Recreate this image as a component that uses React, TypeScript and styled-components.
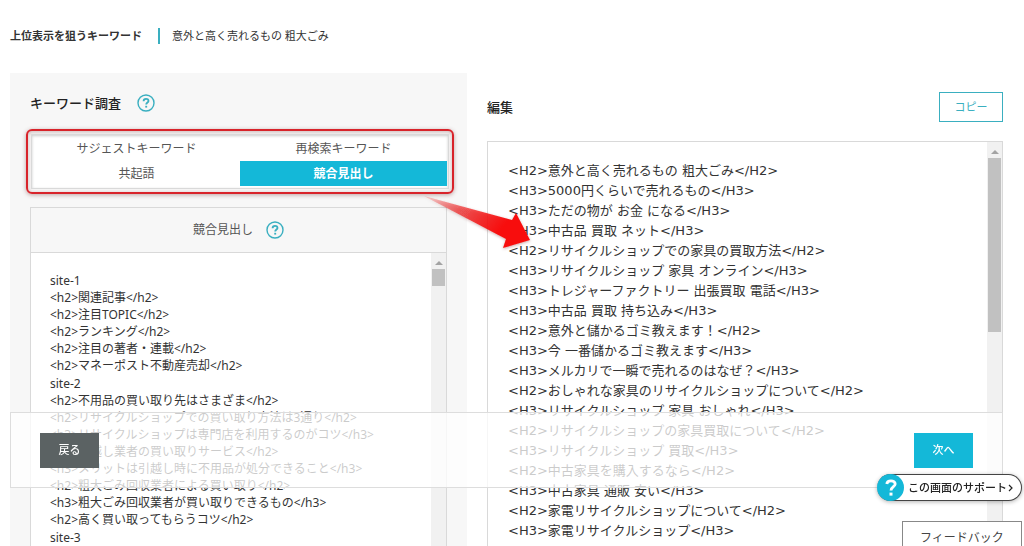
import React from "react";
import styled, { createGlobalStyle } from "styled-components";

const C = {
  accent: "#14b8d8",
  teal: "#3aafc0",
  line: "#d9d9d9",
  panel: "#f7f7f7",
  text: "#333",
  red: "#d8232a",
};

const Global = createGlobalStyle`
  *, *::before, *::after { box-sizing: border-box; }
  body {
    margin: 0;
    background: #fff;
    color: ${C.text};
    font-family: "Noto Sans", "Noto Sans CJK JP", sans-serif;
    font-size: 12px;
    line-height: 20px;
  }
  button, textarea { font: inherit; color: inherit; margin: 0; border-radius: 0; }
  h1, h2, h3, p, ul { margin: 0; padding: 0; font-size: inherit; font-weight: inherit; }
`;

const Page = styled.div`
  display: flex;
  flex-direction: column;
  height: 100vh;
  overflow: hidden;
  padding: 26px 21px 0 10px;
`;

const KeywordBar = styled.header`
  display: flex;
  align-items: center;
  flex: none;
  height: 20px;
  font-size: 11px;
`;

const KeywordLabel = styled.h1`
  padding-right: 16px;
  border-right: 2px solid ${C.teal};
  line-height: 16px;
  font-weight: 700;
`;

const KeywordValue = styled.p`
  padding-left: 12px;
`;

const Columns = styled.main`
  display: grid;
  grid-template-columns: 457fr 516fr;
  column-gap: 20px;
  flex: 1;
  min-height: 0;
  padding-top: 27px;
`;

const Research = styled.section`
  display: flex;
  flex-direction: column;
  min-height: 0;
  padding: 20px 20px 0;
  background: ${C.panel};
`;

const Title = styled.h2`
  display: flex;
  align-items: center;
  gap: 16px;
  font-size: 13px;
  font-weight: 500;
  color: #222;
`;

const HelpButton = styled.button`
  display: flex;
  padding: 0;
  border: 0;
  background: none;
  color: ${C.teal};
`;

const TabFrame = styled.div`
  flex: none;
  margin: 16px -7px 0 -4px;
  padding: 3px;
  border: 2px solid ${C.red};
  border-radius: 6px;
  box-shadow: 0 1px 4px rgba(120, 60, 60, 0.45), inset 0 1px 4px rgba(120, 60, 60, 0.35);
`;

const Tabs = styled.div`
  display: grid;
  grid-template-columns: 1fr 1fr;
  padding: 1px 1px 2px;
  border: 1px solid ${C.line};
  background: #fff;
  box-shadow: inset 0 1px 3px rgba(0, 0, 0, 0.2);
`;

const Tab = styled.button<{ $active?: boolean }>`
  height: 25px;
  padding: 0;
  border: 0;
  font-size: 12px;
  line-height: 25px;
  color: ${(p) => (p.$active ? "#fff" : "#555")};
  background: ${(p) => (p.$active ? C.accent : "transparent")};
  font-weight: ${(p) => (p.$active ? 700 : 400)};
`;

const ResultCard = styled.div`
  display: flex;
  flex-direction: column;
  flex: 1;
  min-height: 0;
  margin-top: 13px;
  border: 1px solid ${C.line};
  border-bottom: 0;
`;

const ResultHead = styled.h3`
  display: flex;
  align-items: center;
  justify-content: center;
  flex: none;
  gap: 13px;
  height: 45px;
  border-bottom: 1px solid ${C.line};
  color: #555;
`;

const ScrollArea = styled.div`
  display: flex;
  flex: 1;
  min-height: 0;
  background: #fff;
`;

const Results = styled.div`
  display: flex;
  flex-direction: column;
  flex: 1;
  gap: 1px;
  padding: 19px;
  overflow: hidden;
  white-space: nowrap;
`;

const Site = styled.ul`
  list-style: none;
  line-height: 17px;
`;

const Track = styled.div`
  display: flex;
  flex-direction: column;
  align-items: center;
  flex: none;
  width: 15px;
  padding: 8px 1px 0;
  gap: 4px;
  background: #f1f1f1;
`;

const Thumb = styled.div<{ $length: number }>`
  flex: none;
  width: 13px;
  height: ${(p) => p.$length}px;
  background: #c1c1c1;
`;

const Editor = styled.section`
  display: flex;
  flex-direction: column;
  min-height: 0;
  padding-top: 19px;
`;

const EditorHead = styled.div`
  display: flex;
  align-items: center;
  justify-content: space-between;
  flex: none;
`;

const CopyButton = styled.button`
  width: 64px;
  height: 30px;
  padding: 0;
  border: 1px solid ${C.teal};
  background: #fff;
  color: ${C.teal};
  font-size: 11px;
`;

const EditorBox = styled.div`
  display: flex;
  flex: 1;
  min-height: 0;
  margin-top: 19px;
  border: 1px solid ${C.line};
  border-bottom: 0;
`;

const EditorText = styled.textarea`
  flex: 1;
  min-width: 0;
  padding: 19px 20px 0;
  border: 0;
  outline: 0;
  resize: none;
  overflow: hidden;
  background: #fff;
  color: ${C.text};
  font-family: "DejaVu Sans", "Noto Sans CJK JP", sans-serif;
  font-size: 13px;
  line-height: 20px;
  white-space: pre;
`;

const FooterBar = styled.footer`
  position: fixed;
  left: 10px;
  right: 21px;
  bottom: 58px;
  display: flex;
  align-items: center;
  justify-content: space-between;
  height: 76px;
  padding: 0 29px;
  border: 1px solid #ddd;
  background: rgba(255, 255, 255, 0.75);
`;

const NavButton = styled.button<{ $primary?: boolean }>`
  width: 59px;
  height: 35px;
  padding: 0;
  border: 0;
  background: ${(p) => (p.$primary ? C.accent : "#5b6263")};
  color: #fff;
  font-size: 11px;
  font-weight: 500;
`;

const SupportButton = styled.button`
  position: fixed;
  right: 2px;
  bottom: 45px;
  display: flex;
  align-items: center;
  width: 145px;
  height: 27px;
  padding: 0;
  border: 1px solid #444;
  border-left: 0;
  border-radius: 14px;
  background: #fff;
  color: #222;
  font-size: 11px;
  font-weight: 500;
  white-space: nowrap;
  box-shadow: 0 1px 4px rgba(0, 0, 0, 0.3);
`;

const SupportMark = styled.span`
  display: flex;
  align-items: center;
  justify-content: center;
  flex: none;
  width: 27px;
  height: 27px;
  margin-right: 4px;
  border-radius: 50%;
  background: ${C.accent};
  color: #fff;
`;

const FeedbackButton = styled.button`
  position: fixed;
  right: 2px;
  bottom: 0;
  width: 120px;
  height: 25px;
  padding: 6px 0 0;
  border: 1px solid #888;
  border-bottom: 0;
  background: #fff;
  color: #444;
  font-size: 12px;
  line-height: 20px;
`;

const Arrow = styled.svg`
  position: absolute;
  left: 420px;
  top: 190px;
  pointer-events: none;
`;

const sites: { name: string; lines: string[] }[] = [
  {
    name: "site-1",
    lines: [
      "<h2>関連記事</h2>",
      "<h2>注目TOPIC</h2>",
      "<h2>ランキング</h2>",
      "<h2>注目の著者・連載</h2>",
      "<h2>マネーポスト不動産売却</h2>",
    ],
  },
  {
    name: "site-2",
    lines: [
      "<h2>不用品の買い取り先はさまざま</h2>",
      "<h2>リサイクルショップでの買い取り方法は3通り</h2>",
      "<h3>リサイクルショップは専門店を利用するのがコツ</h3>",
      "<h2>引越し業者の買い取りサービス</h2>",
      "<h3>メリットは引越し時に不用品が処分できること</h3>",
      "<h2>粗大ごみ回収業者による買い取り</h2>",
      "<h3>粗大ごみ回収業者が買い取りできるもの</h3>",
      "<h2>高く買い取ってもらうコツ</h2>",
    ],
  },
  { name: "site-3", lines: [] },
];

const outline = [
  "<H2>意外と高く売れるもの 粗大ごみ</H2>",
  "<H3>5000円くらいで売れるもの</H3>",
  "<H3>ただの物が お金 になる</H3>",
  "<H3>中古品 買取 ネット</H3>",
  "<H2>リサイクルショップでの家具の買取方法</H2>",
  "<H3>リサイクルショップ 家具 オンライン</H3>",
  "<H3>トレジャーファクトリー 出張買取 電話</H3>",
  "<H3>中古品 買取 持ち込み</H3>",
  "<H2>意外と儲かるゴミ教えます！</H2>",
  "<H3>今 一番儲かるゴミ教えます</H3>",
  "<H3>メルカリで一瞬で売れるのはなぜ？</H3>",
  "<H2>おしゃれな家具のリサイクルショップについて</H2>",
  "<H3>リサイクルショップ 家具 おしゃれ</H3>",
  "<H2>リサイクルショップの家具買取について</H2>",
  "<H3>リサイクルショップ 買取</H3>",
  "<H2>中古家具を購入するなら</H2>",
  "<H3>中古家具 通販 安い</H3>",
  "<H2>家電リサイクルショップについて</H2>",
  "<H3>家電リサイクルショップ</H3>",
].join("\n");

const HelpIcon = () => (
  <svg width="18" height="18" viewBox="0 0 18 18" fill="none" stroke="currentColor" aria-hidden="true">
    <circle cx="9" cy="9" r="8" strokeWidth="1.4" />
    <path d="M6.6 7.2C6.6 5.6 7.6 4.8 9 4.8s2.5.8 2.5 2.1c0 1.5-2.3 1.7-2.3 3.6" strokeWidth="1.8" />
    <path d="M9.2 11.8v1.8" strokeWidth="1.9" />
  </svg>
);

const ScrollTrack = ({ length }: { length: number }) => (
  <Track aria-hidden="true">
    <svg width="8" height="4" viewBox="0 0 8 4">
      <path d="M0 4L4 0l4 4z" fill="#a3a3a3" />
    </svg>
    <Thumb $length={length} />
  </Track>
);

export default function App() {
  return (
    <>
      <Global />
      <Page>
        <KeywordBar>
          <KeywordLabel>上位表示を狙うキーワード</KeywordLabel>
          <KeywordValue>意外と高く売れるもの 粗大ごみ</KeywordValue>
        </KeywordBar>

        <Columns>
          <Research>
            <Title>
              キーワード調査
              <HelpButton type="button" aria-label="ヘルプ">
                <HelpIcon />
              </HelpButton>
            </Title>
            <TabFrame>
              <Tabs role="tablist">
                <Tab type="button" role="tab">サジェストキーワード</Tab>
                <Tab type="button" role="tab">再検索キーワード</Tab>
                <Tab type="button" role="tab">共起語</Tab>
                <Tab type="button" role="tab" aria-selected="true" $active>
                  競合見出し
                </Tab>
              </Tabs>
            </TabFrame>
            <ResultCard>
              <ResultHead>
                競合見出し
                <HelpButton type="button" aria-label="ヘルプ">
                  <HelpIcon />
                </HelpButton>
              </ResultHead>
              <ScrollArea>
                <Results>
                  {sites.map((site) => (
                    <Site key={site.name}>
                      <li>{site.name}</li>
                      {site.lines.map((line) => (
                        <li key={line}>{line}</li>
                      ))}
                    </Site>
                  ))}
                </Results>
                <ScrollTrack length={17} />
              </ScrollArea>
            </ResultCard>
          </Research>

          <Editor>
            <EditorHead>
              <Title as="label" htmlFor="editor">編集</Title>
              <CopyButton type="button">コピー</CopyButton>
            </EditorHead>
            <EditorBox>
              <EditorText id="editor" defaultValue={outline} spellCheck={false} />
              <ScrollTrack length={174} />
            </EditorBox>
          </Editor>
        </Columns>
      </Page>

      <Arrow width="120" height="66" viewBox="0 0 120 66" aria-hidden="true">
        <defs>
          <linearGradient id="arrowFill" x1="0" y1="0" x2="1" y2="0.4">
            <stop offset="0" stopColor="#f01818" stopOpacity="0.15" />
            <stop offset="0.4" stopColor="#f01818" stopOpacity="0.65" />
            <stop offset="0.85" stopColor="#f80c0c" />
          </linearGradient>
          <filter id="arrowShadow" x="-10%" y="-10%" width="120%" height="130%">
            <feDropShadow dx="0" dy="1" stdDeviation="1.5" floodColor="#600" floodOpacity="0.35" />
          </filter>
        </defs>
        <path d="M4 6L92 30l4-7 14 27-27 8 3-9z" fill="url(#arrowFill)" filter="url(#arrowShadow)" />
      </Arrow>

      <FooterBar>
        <NavButton type="button">戻る</NavButton>
        <NavButton type="button" $primary>次へ</NavButton>
      </FooterBar>

      <SupportButton type="button">
        <SupportMark>
          <svg width="12" height="18" viewBox="0 0 12 18" fill="none" stroke="currentColor" aria-hidden="true">
            <path d="M1.8 5C2 2.8 3.8 1.8 6 1.8s4.2 1.2 4.2 3.2C10.2 7.6 6 7.8 6 11.6" strokeWidth="2.8" />
            <path d="M6 13.6v3" strokeWidth="3" />
          </svg>
        </SupportMark>
        この画面のサポート
        <svg width="7" height="8" viewBox="0 0 7 8" fill="none" stroke="currentColor" aria-hidden="true">
          <path d="M2 1l3 3-3 3" strokeWidth="1.2" />
        </svg>
      </SupportButton>

      <FeedbackButton type="button">フィードバック</FeedbackButton>
    </>
  );
}
